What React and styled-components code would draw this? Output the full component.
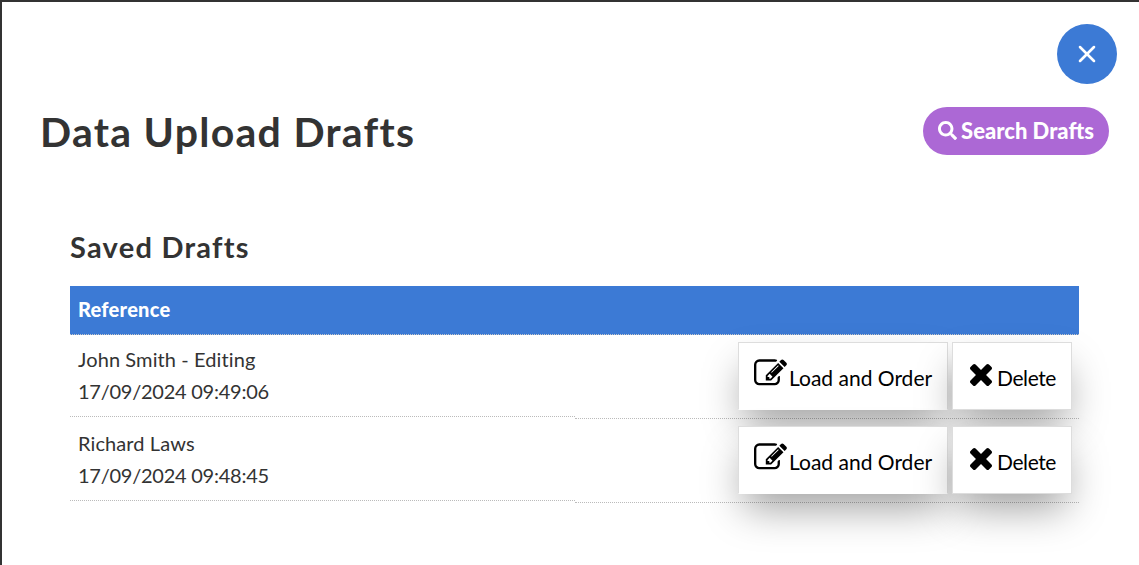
import styled, { createGlobalStyle } from "styled-components"
import { FaSearch } from "react-icons/fa"
import { X } from "lucide-react"

const GlobalStyle = createGlobalStyle`
  html, body {
    margin: 0;
    background: #333;
    overflow: hidden;
  }
  * {
    box-sizing: border-box;
  }
`;

const Modal = styled.div`
  margin: 2px 0 0 2px;
  height: 563px;
  padding: 22px 22px 0 38px;
  background: #fff;
  color: #333;
  font-family: "Lato", sans-serif;
`;
const CloseRow = styled.div`
  display: flex;
  justify-content: flex-end;
`;
const CloseButton = styled.div`
  width: 60px;
  height: 60px;
  border-radius: 50%;
  background: #3c7ad5;
  color: #fff;
  display: flex;
  align-items: center;
  justify-content: center;
`;
const TitleRow = styled.div`
  display: flex;
  align-items: center;
  justify-content: space-between;
  margin: 23px 8px 0 0;
  height: 48px;
`;
const Title = styled.h1`
  margin: 0;
  font-size: 41px;
  font-weight: 700;
  letter-spacing: 1.28px;
`;
const SearchButton = styled.div`
  width: 186px;
  height: 48px;
  padding-bottom: 2px;
  border-radius: 24px;
  background: #ac68d5;
  color: #fff;
  font-size: 22px;
  font-weight: 900;
  display: flex;
  align-items: center;
  justify-content: center;
  gap: 4px;
`;
const Section = styled.div`
  margin: 74px 38px 0 30px;
`;
const SubTitle = styled.h2`
  margin: 0;
  height: 38px;
  line-height: 36px;
  font-size: 29px;
  font-weight: 700;
  letter-spacing: 1.25px;
`;
const TableHead = styled.div`
  height: 49px;
  margin-top: 19px;
  padding: 0 8px;
  background: #3c7ad5;
  border-bottom: 1px dotted #c8c8c8;
  color: #fff;
  font-size: 20px;
  font-weight: 900;
  letter-spacing: 0.25px;
  line-height: 47px;
`;
const Row = styled.div`
  display: flex;
  align-items: flex-start;
  height: 84px;
`;
const InfoCell = styled.div`
  width: 505px;
  height: 82px;
  padding: 8px 8px 0;
  border-bottom: 1px dotted #bbb;
  font-size: 20px;
  line-height: 32px;
`;
const DraftName = styled.div`
  letter-spacing: 0.1px;
`;
const DraftDate = styled.div`
  letter-spacing: -0.25px;
`;
const ActionCell = styled.div`
  flex: 1;
  height: 84px;
  padding: 7px 7px 0 0;
  display: flex;
  justify-content: flex-end;
  gap: 4px;
  border-bottom: 1px dotted #bbb;
`;
const ActionButton = styled.div`
  width: ${props => props.width}px;
  height: 68px;
  padding: 2px 0 0 ${props => props.left}px;
  background: #fff;
  border: 1px solid #ddd;
  border-bottom-color: ${props => props.$open ? "transparent" : "#ddd"};
  box-shadow: 0 20px 40px -6px rgba(0, 0, 0, 0.38);
  color: #000;
  font-size: 21px;
  letter-spacing: ${props => props.spacing}px;
  display: flex;
  align-items: center;
  gap: ${props => props.gap}px;
  position: relative;
`;
const IconSvg = styled.svg`
  flex: none;
  margin-top: ${props => props.$lift}px;
  fill: currentColor;
`;

const EditIcon = () => (
  <IconSvg $lift={-7} width="33" height="33" viewBox="0 0 1792 1792">
    <path d="M888 1184l116-116-152-152-116 116v56h96v96h56zm440-720q-16-16-33 1l-350 350q-17 17-1 33t33-1l350-350q17-17 1-33zm80 594v190q0 119-84.5 203.5t-203.5 84.5h-832q-119 0-203.5-84.5t-84.5-203.5v-832q0-119 84.5-203.5t203.5-84.5h832q63 0 117 25 15 7 18 23 3 17-9 29l-49 49q-14 14-32 8-23-6-45-6h-832q-66 0-113 47t-47 113v832q0 66 47 113t113 47h832q66 0 113-47t47-113v-126q0-13 9-22l64-64q15-15 35-7t20 29zm-96-738l288 288-672 672h-288v-288zm444 132l-92 92-288-288 92-92q28-28 68-28t68 28l152 152q28 28 28 68t-28 68z" />
  </IconSvg>
)

const CrossIcon = () => (
  <IconSvg $lift={-5} width="22" height="22" viewBox="110 -18 1188 1188">
    <path d="M1298 214q0 40-28 68l-294 294 294 294q28 28 28 68t-28 68l-136 136q-28 28-68 28t-68-28l-294-294-294 294q-28 28-68 28t-68-28l-136-136q-28-28-28-68t28-68l294-294-294-294q-28-28-28-68t28-68l136-136q28-28 68-28t68 28l294 294 294-294q28-28 68-28t68 28l136 136q28 28 28 68z" />
  </IconSvg>
)

const drafts = [
  { name: "John Smith - Editing", date: "17/09/2024 09:49:06" },
  { name: "Richard Laws", date: "17/09/2024 09:48:45" },
]

const App = () => {
  return (
    <Modal>
      <GlobalStyle />
      <CloseRow>
        <CloseButton><X size={28} strokeWidth={2.2} /></CloseButton>
      </CloseRow>
      <TitleRow>
        <Title>Data Upload Drafts</Title>
        <SearchButton><FaSearch size={19} />Search Drafts</SearchButton>
      </TitleRow>
      <Section>
        <SubTitle>Saved Drafts</SubTitle>
        <TableHead>Reference</TableHead>
        {drafts.map(d => (
          <Row key={d.date}>
            <InfoCell>
              <DraftName>{d.name}</DraftName>
              <DraftDate>{d.date}</DraftDate>
            </InfoCell>
            <ActionCell>
              <ActionButton width={210} left={15} gap={2} spacing={0} $open><EditIcon />Load and Order</ActionButton>
              <ActionButton width={120} left={17} gap={5} spacing={-0.4}><CrossIcon />Delete</ActionButton>
            </ActionCell>
          </Row>
        ))}
      </Section>
    </Modal>
  )
}

export default App
